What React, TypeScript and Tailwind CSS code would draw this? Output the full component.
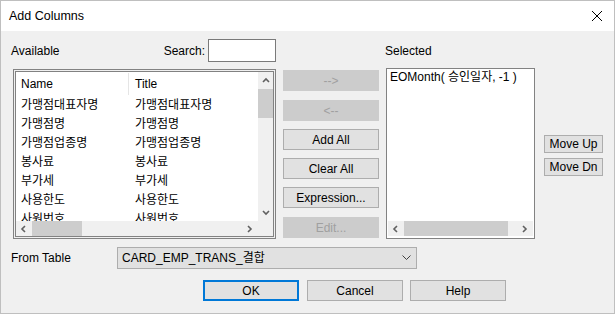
const rows = [
  "가맹점대표자명",
  "가맹점명",
  "가맹점업종명",
  "봉사료",
  "부가세",
  "사용한도",
  "사원번호",
];

const FONT = "font-['Liberation_Sans','Noto_Sans_CJK_KR',sans-serif]";

function Chevron({ dir, className = "" }: { dir: "up" | "down" | "left" | "right"; className?: string }) {
  const d = {
    up: "M1 5 L4 2 L7 5",
    down: "M1 2 L4 5 L7 2",
    left: "M5 1 L2 4 L5 7",
    right: "M2 1 L5 4 L2 7",
  }[dir];
  return (
    <svg width="8" height="8" viewBox="0 0 8 8" className={className}>
      <path d={d} fill="none" stroke="#606060" strokeWidth="1.6" />
    </svg>
  );
}

function Btn({
  label,
  disabled,
  className = "",
}: {
  label: string;
  disabled?: boolean;
  className?: string;
}) {
  return (
    <div
      className={
        "flex items-center justify-center border " +
        (disabled
          ? "bg-[#cccccc] border-[#cccccc] text-[#a0a0a0] "
          : "bg-[#e1e1e1] border-[#adadad] text-black ") +
        className
      }
    >
      {label}
    </div>
  );
}

function AvailableList() {
  return (
    <div className="w-[263px] h-[170px] border border-[#828282] p-px bg-[#f0f0f0]">
      <div className="w-full h-full border border-[#828282] bg-white flex flex-col">
        <div className="flex flex-1 min-h-0">
          <div className="flex-1 min-w-0 overflow-hidden">
            <div className="h-[23px] flex items-center relative">
              <span className="w-[112px] pl-[5px]">Name</span>
              <div className="w-px h-[22px] bg-[#e5e5e5]" />
              <span className="pl-[6px]">Title</span>
            </div>
            {rows.map((r) => (
              <div key={r} className="h-[19px] flex items-center whitespace-nowrap">
                <span className="w-[113px] pl-[5px]">{r}</span>
                <span className="pl-[6px]">{r}</span>
              </div>
            ))}
          </div>
          <div className="w-[15px] bg-[#f0f0f0] flex flex-col items-center">
            <div className="h-[17px] flex items-center justify-center">
              <Chevron dir="up" />
            </div>
            <div className="w-[15px] h-[29px] bg-[#cdcdcd]" />
            <div className="flex-1" />
            <div className="h-[17px] flex items-center justify-center">
              <Chevron dir="down" />
            </div>
          </div>
        </div>
        <div className="h-[15px] flex bg-[#f0f0f0]">
          <div className="flex-1 flex items-center">
            <div className="w-[16px] flex justify-center">
              <Chevron dir="left" />
            </div>
            <div className="w-[50px] h-[15px] bg-[#cdcdcd]" />
            <div className="flex-1" />
            <div className="w-[16px] flex justify-center">
              <Chevron dir="right" />
            </div>
          </div>
          <div className="w-[15px]" />
        </div>
      </div>
    </div>
  );
}

function SelectedList() {
  return (
    <div className="w-[149px] h-[171px] -mt-px border border-[#828282] bg-white flex flex-col">
      <div className="flex-1 pl-[3px] pt-[2px] whitespace-nowrap">EOMonth( 승인일자, -1 )</div>
      <div className="h-[15px] mb-[2px] mx-px flex items-center bg-[#f0f0f0]">
        <div className="w-[16px] flex justify-center">
          <Chevron dir="left" />
        </div>
        <div className="w-[104px] h-[15px] bg-[#cdcdcd]" />
        <div className="flex-1" />
        <div className="w-[16px] flex justify-center">
          <Chevron dir="right" />
        </div>
      </div>
    </div>
  );
}

export default function App() {
  return (
    <div
      className={
        "w-[615px] h-[314px] bg-[#f0f0f0] border border-[#bfbfbf] flex flex-col text-[12px] text-black leading-none " +
        FONT
      }
    >
      {/* Title bar */}
      <div className="h-[30px] bg-white flex items-center justify-between pl-[8px] pr-[11px]">
        <span className="text-[12.5px]">Add Columns</span>
        <svg width="12" height="12" viewBox="0 0 12 12">
          <path d="M1 1 L11 11 M11 1 L1 11" stroke="#000" strokeWidth="1" />
        </svg>
      </div>

      {/* Labels row */}
      <div className="mt-[8px] h-[23px] flex items-center">
        <div className="ml-[10px] w-[265px] flex items-center justify-between">
          <span>Available</span>
          <div className="flex items-center">
            <span className="mr-[3px]">Search:</span>
            <div className="w-[68px] h-[23px] bg-white border border-[#7a7a7a]" />
          </div>
        </div>
        <span className="ml-[109px]">Selected</span>
      </div>

      {/* Main area */}
      <div className="mt-[7px] flex items-start">
        <div className="ml-[12px]">
          <AvailableList />
        </div>
        <div className="ml-[7px] w-[96px] flex flex-col pt-px">
          <Btn label="-->" disabled className="h-[21px]" />
          <Btn label="<--" disabled className="h-[21px] mt-[9px]" />
          <Btn label="Add All" className="h-[21px] mt-[8px]" />
          <Btn label="Clear All" className="h-[21px] mt-[8px]" />
          <Btn label="Expression..." className="h-[21px] mt-[8px]" />
          <Btn label="Edit..." disabled className="h-[21px] mt-[9px]" />
        </div>
        <div className="ml-[7px]">
          <SelectedList />
        </div>
        <div className="ml-[9px] w-[59px] flex flex-col pt-[66px]">
          <Btn label="Move Up" className="h-[18px]" />
          <Btn label="Move Dn" className="h-[18px] mt-[5px]" />
        </div>
      </div>

      {/* From table */}
      <div className="mt-[8px] flex items-center h-[22px]">
        <span className="ml-[10px] w-[106px]">From Table</span>
        <div className="w-[300px] h-[22px] bg-[#e1e1e1] border border-[#adadad] flex items-center justify-between pl-[4px] pr-[5px]">
          <span>CARD_EMP_TRANS_결합</span>
          <svg width="9" height="6" viewBox="0 0 9 6">
            <path d="M0.5 0.5 L4.5 4.5 L8.5 0.5" fill="none" stroke="#404040" strokeWidth="1" />
          </svg>
        </div>
      </div>

      {/* Bottom buttons */}
      <div className="mt-[11px] flex">
        <div className="ml-[202px] w-[96px] h-[21px] bg-[#e1e1e1] border-2 border-[#0078d7] flex items-center justify-center">
          OK
        </div>
        <Btn label="Cancel" className="ml-[8px] w-[96px] h-[21px]" />
        <Btn label="Help" className="ml-[7px] w-[96px] h-[21px]" />
      </div>
    </div>
  );
}
